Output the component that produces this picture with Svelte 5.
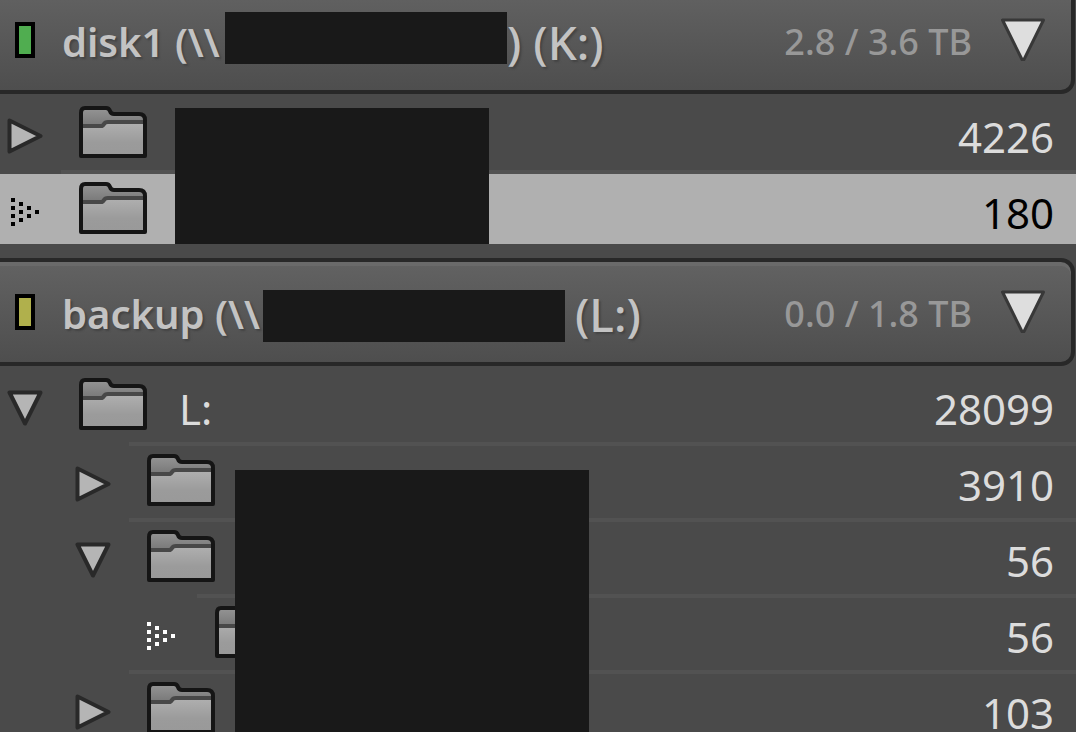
<script>
  let volumes = $state([
    {
      lead: 'disk1 (\\\\', leadWidth: 163, maskWidth: 282, tail: ') (K:)', tailGap: 0,
      usage: '2.8 / 3.6 TB', light: 'green', low: false,
      cover: { left: 175, top: 14, width: 314 },
      folders: [
        { depth: 0, state: 'closed', name: '', count: 4226 },
        { depth: 0, state: 'leaf', name: '', count: 180, selected: true }
      ]
    },
    {
      lead: 'backup (\\\\', leadWidth: 201, maskWidth: 302, tail: '(L:)', tailGap: 10,
      usage: '0.0 / 1.8 TB', light: 'yellow', low: true,
      cover: { left: 235, top: 104, width: 354 },
      folders: [
        { depth: 0, state: 'open', name: 'L:', count: 28099 },
        { depth: 1, state: 'closed', name: '', count: 3910 },
        { depth: 1, state: 'open', name: '', count: 56 },
        { depth: 2, state: 'leaf', name: '', count: 56 },
        { depth: 1, state: 'closed', name: '', count: 103 }
      ]
    }
  ]);

  const dots = [0, 1, 2, 3].flatMap((col) =>
    Array.from({ length: 4 - col }, (_, row) => ({ x: 4 + col * 8, y: 4 + col * 4 + row * 8 }))
  );
</script>

<svg class="defs" aria-hidden="true">
  <defs>
    <linearGradient id="back" x1="0" y1="0" x2="0" y2="1">
      <stop offset="0" stop-color="#959595" />
      <stop offset="0.4" stop-color="#767676" />
    </linearGradient>
    <linearGradient id="front" x1="0" y1="0" x2="0" y2="1">
      <stop offset="0" stop-color="#b0b0b0" />
      <stop offset="0.6" stop-color="#9b9b9b" />
      <stop offset="1" stop-color="#999" />
    </linearGradient>
  </defs>
</svg>

<main>
  {#each volumes as volume}
    <section>
      <header>
        <span class="light {volume.light}"></span>
        <h2>
          <span class="lead" style="width: {volume.leadWidth}px">{volume.lead}</span>
          <span class="mask" class:low={volume.low} style="width: {volume.maskWidth}px"></span>
          <span class="tail" style="margin-left: {volume.tailGap}px">{volume.tail}</span>
        </h2>
        <span class="usage">{volume.usage}</span>
        <button aria-label="Collapse volume">
          <svg width="46" height="46" viewBox="0 0 46 46">
            <path d="M2.5 3H43.5L24 42.5H22Z" fill="#dedede" stroke="#383838" stroke-width="3" stroke-linejoin="round" />
          </svg>
        </button>
      </header>
      <div class="body">
        <ul>
          {#each volume.folders as folder}
            <li style="--depth: {folder.depth}">
              <div class="row" class:selected={folder.selected}>
                <button aria-label="Toggle folder">
                  <svg width="36" height="36" viewBox="0 0 36 36">
                    {#if folder.state === 'leaf'}
                      {#each dots as dot}
                        <rect x={dot.x} y={dot.y} width="4" height="4" fill="currentColor" />
                      {/each}
                    {:else}
                      <path
                        d={folder.state === 'open' ? 'M2.5 2.5H33.5L18 33.5Z' : 'M2.5 2.5L33.5 18L2.5 33.5Z'}
                        fill="#b5b5b5" stroke="#292929" stroke-width="4" stroke-linejoin="round"
                      />
                    {/if}
                  </svg>
                </button>
                <svg class="folder" width="68" height="52" viewBox="0 0 68 52" aria-hidden="true">
                  <path d="M2 50V7Q2 2 6 2H27Q30 2 31 5Q32 8 35 8H60Q66 8 66 14V50Z" fill="url(#back)" />
                  <path d="M3 20H23L28 16H65V50H3Z" fill="url(#front)" />
                  <path d="M3 20H22Q24 20 25 18Q26 16 29 16H65" fill="none" stroke="#484848" stroke-width="4" />
                  <path d="M2 50V7Q2 2 6 2H27Q30 2 31 5Q32 8 35 8H60Q66 8 66 14V50Z" fill="none" stroke="#151515" stroke-width="4" stroke-linejoin="round" />
                </svg>
                <span class="name">{folder.name}</span>
                <span class="count">{folder.count}</span>
              </div>
            </li>
          {/each}
        </ul>
        <div class="cover" style="left: {volume.cover.left}px; top: {volume.cover.top}px; width: {volume.cover.width}px"></div>
      </div>
    </section>
  {/each}
</main>

<style>
  :global(body) {
    margin: 0;
    background: #4a4a4a;
  }
  .defs {
    position: absolute;
    width: 0;
    height: 0;
  }
  main {
    height: 100vh;
    overflow: hidden;
    background: #4a4a4a;
    color: #dcdcdc;
    font-family: "Noto Sans", sans-serif;
    font-size: 42px;
  }
  section {
    padding-bottom: 14px;
  }
  section:first-child {
    margin-top: -14px;
  }
  header {
    box-sizing: border-box;
    height: 108px;
    margin-right: 1px;
    padding: 0 25px 0 15px;
    display: flex;
    align-items: center;
    border: 4px solid #282828;
    border-left: 0;
    border-radius: 0 14px 14px 0;
    background: linear-gradient(#626262, #4e4e4e);
    box-shadow: inset 0 4px #6a6a6a;
  }
  .light {
    box-sizing: border-box;
    width: 20px;
    height: 36px;
    margin-right: 27px;
    border: 4px solid #000;
  }
  .green {
    background: #50ad50;
  }
  .yellow {
    background: #b0b04c;
  }
  h2 {
    flex: 1;
    margin: 0;
    display: flex;
    align-items: center;
    color: #c3c3c3;
    font-size: 40px;
    font-weight: 600;
    line-height: 60px;
    white-space: pre;
    text-shadow: 2px 2px 2px #444;
  }
  .lead,
  .tail {
    padding-top: 4px;
  }
  .lead {
    overflow: hidden;
  }
  .tail {
    font-size: 46px;
    font-weight: 500;
  }
  .mask {
    height: 52px;
    margin-bottom: 4px;
    background: #191919;
  }
  .mask.low {
    margin: 8px 0 0;
  }
  .usage {
    margin-right: 28px;
    padding-top: 2px;
    color: #989898;
    font-size: 36px;
    font-weight: 500;
    white-space: nowrap;
  }
  button {
    flex: none;
    display: block;
    padding: 0;
    border: 0;
    background: none;
    color: inherit;
  }
  svg {
    display: block;
  }
  .body {
    position: relative;
    padding-top: 4px;
  }
  ul {
    margin: 0;
    padding: 0;
    list-style: none;
  }
  li + li::before {
    content: "";
    display: block;
    height: 4px;
    margin-left: calc(61px + var(--depth) * 68px);
    background: #525252;
  }
  .row {
    box-sizing: border-box;
    height: 72px;
    padding: 4px 22px 0 calc(7px + var(--depth) * 68px);
    display: flex;
    align-items: center;
  }
  .row button {
    color: #fff;
  }
  .selected {
    height: 70px;
    padding-top: 6px;
    background: #b0b0b0;
    color: #000;
  }
  .selected button {
    color: #000;
  }
  .folder {
    flex: none;
    margin: 0 32px 8px 36px;
  }
  .name {
    flex: 1;
  }
  .cover {
    position: absolute;
    bottom: 0;
    background: #191919;
  }
</style>
